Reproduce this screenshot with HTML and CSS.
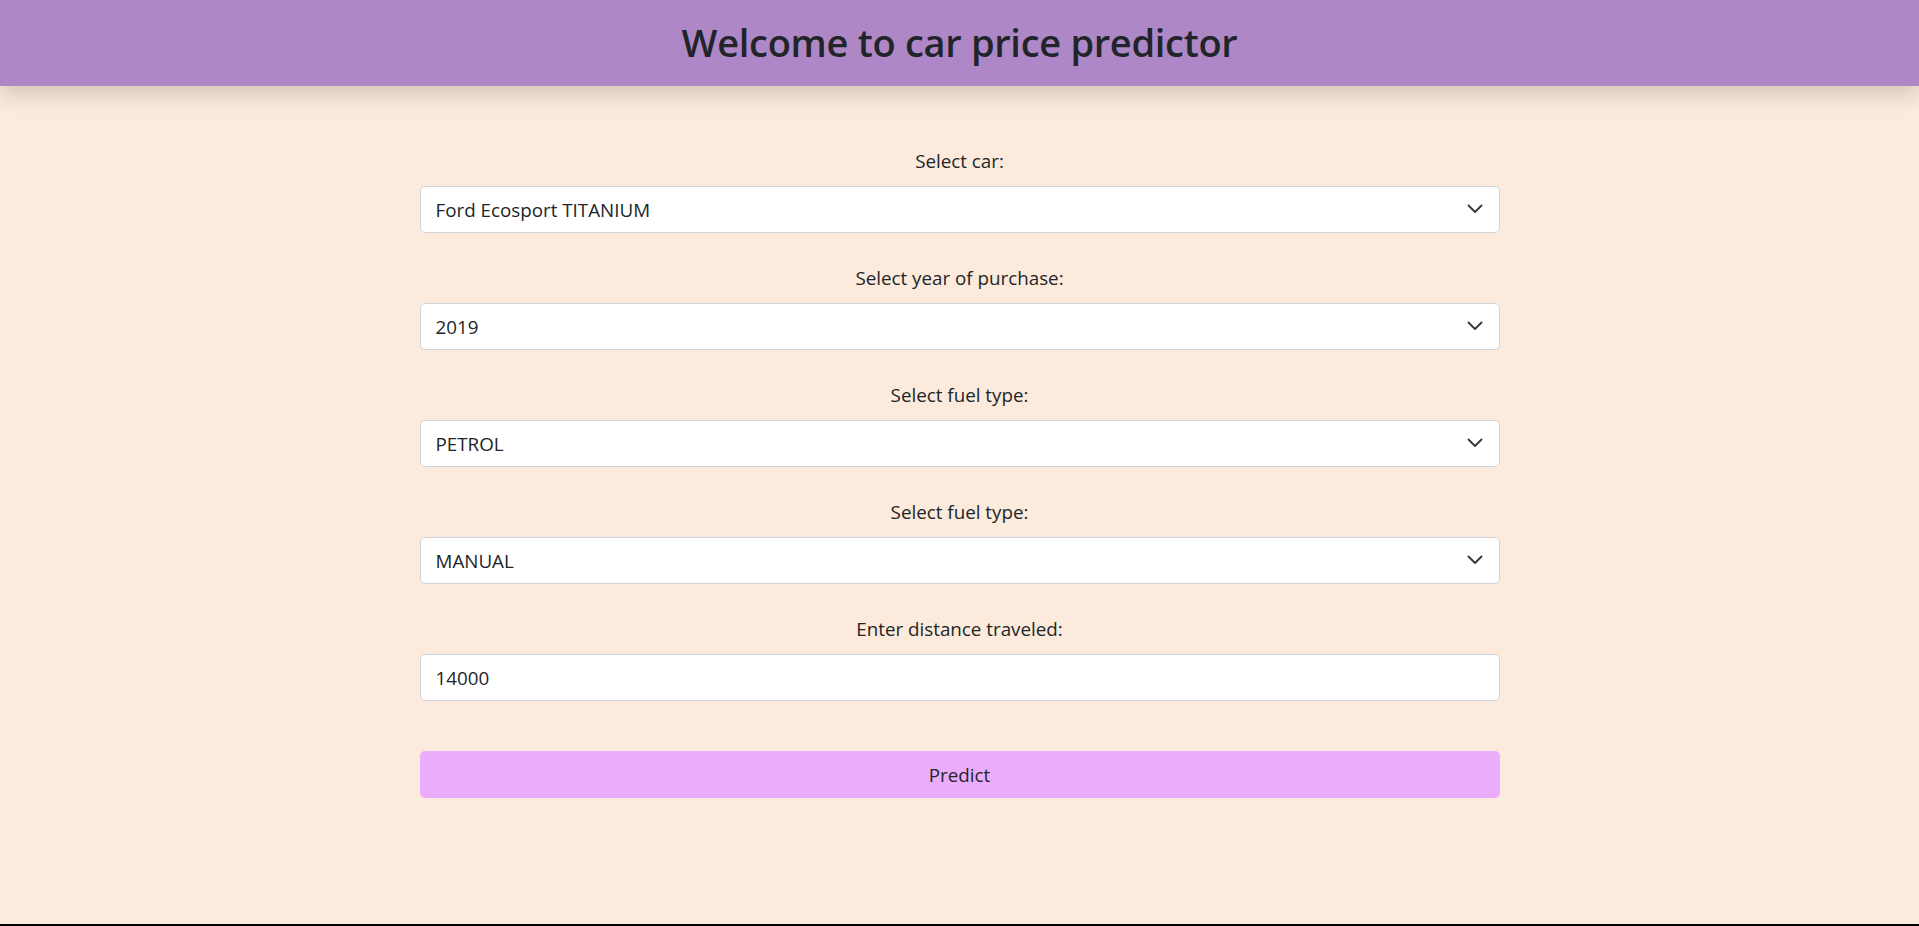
FILE: index.html
```html
<!DOCTYPE html>
<html lang="en">
<head>
<meta charset="utf-8">
<title>Car price predictor</title>
<link rel="stylesheet" href="styles.css">
</head>
<body>
<div class="page">
  <header class="topbar">
    <h1 class="title">Welcome to car price predictor</h1>
  </header>
  <main class="content">
    <form class="form">
      <div class="field">
        <label class="label">Select car:</label>
        <div class="select-wrap">
          <select class="control"><option>Ford Ecosport TITANIUM</option></select>
          <svg class="chevron" viewBox="0 0 16 10" width="16" height="10"><path d="M1.5 1.5l6.5 6.5 6.5-6.5" fill="none" stroke="#343a40" stroke-width="1.9" stroke-linecap="round" stroke-linejoin="round"/></svg>
        </div>
      </div>
      <div class="field">
        <label class="label">Select year of purchase:</label>
        <div class="select-wrap">
          <select class="control"><option>2019</option></select>
          <svg class="chevron" viewBox="0 0 16 10" width="16" height="10"><path d="M1.5 1.5l6.5 6.5 6.5-6.5" fill="none" stroke="#343a40" stroke-width="1.9" stroke-linecap="round" stroke-linejoin="round"/></svg>
        </div>
      </div>
      <div class="field">
        <label class="label">Select fuel type:</label>
        <div class="select-wrap">
          <select class="control"><option>PETROL</option></select>
          <svg class="chevron" viewBox="0 0 16 10" width="16" height="10"><path d="M1.5 1.5l6.5 6.5 6.5-6.5" fill="none" stroke="#343a40" stroke-width="1.9" stroke-linecap="round" stroke-linejoin="round"/></svg>
        </div>
      </div>
      <div class="field">
        <label class="label">Select fuel type:</label>
        <div class="select-wrap">
          <select class="control"><option>MANUAL</option></select>
          <svg class="chevron" viewBox="0 0 16 10" width="16" height="10"><path d="M1.5 1.5l6.5 6.5 6.5-6.5" fill="none" stroke="#343a40" stroke-width="1.9" stroke-linecap="round" stroke-linejoin="round"/></svg>
        </div>
      </div>
      <div class="field">
        <label class="label">Enter distance traveled:</label>
        <input class="control" type="text" value="14000">
      </div>
      <button class="predict" type="button">Predict</button>
    </form>
  </main>
</div>
</body>
</html>
```
FILE: styles.css
```css
* { box-sizing: border-box; }
html, body { margin: 0; padding: 0; }
body {
  font-family: "Segoe UI", "Open Sans", "Noto Sans", sans-serif;
  color: #212529;
  background: #fcebdc;
}
.page {
  height: 926px;
  display: flex;
  flex-direction: column;
  border-bottom: 2px solid #000;
}
.topbar {
  height: 86px;
  background: #ae88c6;
  display: flex;
  align-items: center;
  justify-content: center;
  box-shadow: 0 10px 20px rgba(0, 0, 0, 0.15);
  position: relative;
  z-index: 1;
}
.title {
  margin: 0;
  font-size: 38px;
  font-weight: 600;
  line-height: 1.2;
  letter-spacing: -0.3px;
}
.content {
  display: flex;
  justify-content: center;
  padding-top: 60px;
}
.form {
  width: 1080px;
  display: flex;
  flex-direction: column;
}
.field {
  display: flex;
  flex-direction: column;
  margin-bottom: 30.5px;
}
.label {
  text-align: center;
  font-size: 18.8px;
  line-height: 30px;
  margin-bottom: 10px;
}
.select-wrap { position: relative; }
.control {
  display: block;
  width: 100%;
  height: 46.5px;
  padding: 2px 15px 0;
  font-family: inherit;
  font-size: 18.8px;
  color: #212529;
  background: #fff;
  border: 1px solid #ced4da;
  border-radius: 5px;
  appearance: none;
  -webkit-appearance: none;
  outline: none;
}
.chevron {
  position: absolute;
  right: 17px;
  top: 18px;
  pointer-events: none;
}
.predict {
  margin-top: 20px;
  height: 46.5px;
  width: 100%;
  padding: 2px 0 0;
  border: 0;
  border-radius: 5px;
  background: #ebadfb;
  color: #212529;
  font-family: inherit;
  font-size: 18.8px;
}
```
